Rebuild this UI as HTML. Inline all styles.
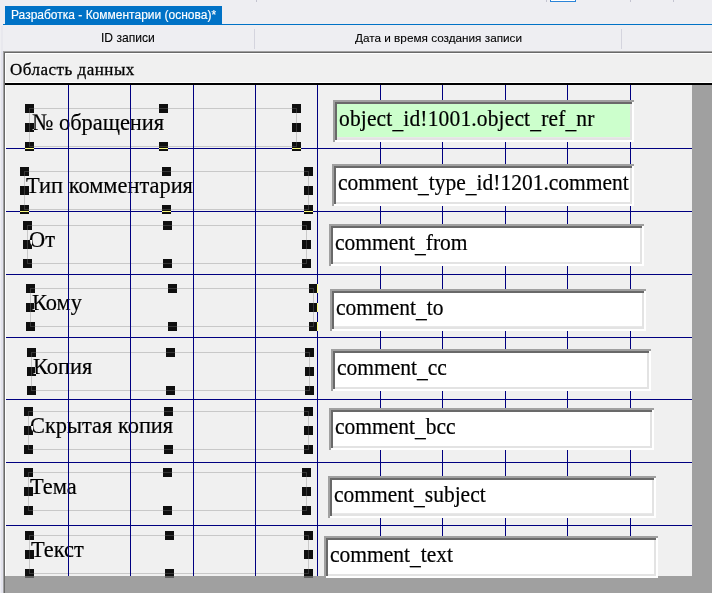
<!DOCTYPE html>
<html><head><meta charset="utf-8"><style>
*{margin:0;padding:0;box-sizing:border-box}
html,body{width:712px;height:593px;overflow:hidden;background:#eeeef2;position:relative}
div{position:absolute}
.sans{font-family:"Liberation Sans",sans-serif}
.serif{font-family:"Liberation Serif",serif}
.vl{width:1px;background:#000080}
.hl{height:1px;background:#000080}
.h{width:9px;height:9px;background:#fff;mix-blend-mode:difference}
.ol{border:1px solid #c8c8c8}
.lt{font-size:22.4px;line-height:22px;white-space:nowrap;color:#000;transform:scaleY(1.06);transform-origin:0 18px;-webkit-text-stroke:0.2px #000}
.tb{border-style:solid;border-width:2px;border-color:#a0a0a0 #fff #fff #a0a0a0}
.tbi{left:0;top:0;right:0;bottom:0;border-style:solid;border-width:2px;border-color:#696969 #e3e3e3 #e3e3e3 #696969;overflow:hidden}
.tt{font-size:21.5px;line-height:22px;white-space:nowrap;color:#000;transform:scaleY(1.08);transform-origin:0 18px;-webkit-text-stroke:0.2px #000}
</style></head><body>

<div style="left:256px;top:0;width:1px;height:2px;background:#c4c4d0"></div>
<div style="left:546px;top:0;width:1px;height:2px;background:#c4c4d0"></div>
<div style="left:550px;top:-1px;width:26px;height:3px;border:1px solid #2b84d8;background:#fff"></div>
<div style="left:630px;top:0;width:1px;height:2px;background:#c4c4d0"></div>
<div style="left:673px;top:0;width:1px;height:2px;background:#c4c4d0"></div>
<div style="left:3px;top:24px;width:709px;height:1px;background:#0072c6"></div>
<div class="sans" style="left:5px;top:6px;width:217px;height:19px;background:#0072c6;color:#fff;font-size:12px;line-height:19px;padding-left:6px;white-space:nowrap;-webkit-text-stroke:0.15px #fff">Разработка - Комментарии (основа)*</div>
<div class="sans" style="left:101px;top:30px;font-size:12.1px;line-height:16px;color:#000;white-space:nowrap;-webkit-text-stroke:0.1px #000">ID записи</div>
<div style="left:254px;top:29px;width:1px;height:20px;background:#d4d4de"></div>
<div class="sans" style="left:355px;top:30px;font-size:11.75px;line-height:16px;color:#000;white-space:nowrap;-webkit-text-stroke:0.1px #000">Дата и время создания записи</div>
<div style="left:621px;top:29px;width:1px;height:20px;background:#d4d4de"></div>
<div style="left:1px;top:26px;width:2px;height:25px;background:#e8e8ee"></div>
<div style="left:1px;top:51px;width:2px;height:542px;background:#e2e2ec"></div>
<div style="left:3px;top:51px;width:709px;height:542px;background:#a0a0a0"></div>
<div style="left:4px;top:52px;width:708px;height:541px;background:#696969"></div>
<div style="left:5px;top:53px;width:707px;height:540px;background:#fff"></div>
<div style="left:6px;top:54px;width:706px;height:539px;background:#f0f0f0"></div>
<div class="serif" style="left:10px;top:60px;font-size:17px;letter-spacing:0.5px;-webkit-text-stroke:0.3px #000;line-height:20px;white-space:nowrap;color:#000">Область данных</div>
<div style="left:5px;top:82px;width:707px;height:1px;background:#fff"></div>
<div style="left:5px;top:83px;width:707px;height:2px;background:#000"></div>
<div class="ol" style="left:29px;top:108px;width:268px;height:39px"></div>
<div class="serif lt" style="left:32px;top:112px">№ обращения</div>
<div class="ol" style="left:24px;top:171px;width:285px;height:39px"></div>
<div class="serif lt" style="left:26px;top:175px">Тип комментария</div>
<div class="ol" style="left:27px;top:225px;width:280px;height:39px"></div>
<div class="serif lt" style="left:29px;top:229px">От</div>
<div class="ol" style="left:30px;top:288px;width:284px;height:39px"></div>
<div class="serif lt" style="left:32px;top:292px">Кому</div>
<div class="ol" style="left:31px;top:352px;width:279px;height:39px"></div>
<div class="serif lt" style="left:33px;top:356px">Копия</div>
<div class="ol" style="left:28px;top:411px;width:281px;height:39px"></div>
<div class="serif lt" style="left:30px;top:415px">Скрытая копия</div>
<div class="ol" style="left:28px;top:472px;width:279px;height:39px"></div>
<div class="serif lt" style="left:30px;top:476px">Тема</div>
<div class="ol" style="left:29px;top:535px;width:280px;height:39px"></div>
<div class="serif lt" style="left:31px;top:539px">Текст</div>
<div class="vl" style="left:68px;top:85px;height:491px"></div>
<div class="vl" style="left:130px;top:85px;height:491px"></div>
<div class="vl" style="left:193px;top:85px;height:491px"></div>
<div class="vl" style="left:255px;top:85px;height:491px"></div>
<div class="vl" style="left:317px;top:85px;height:491px"></div>
<div class="vl" style="left:380px;top:85px;height:491px"></div>
<div class="vl" style="left:442px;top:85px;height:491px"></div>
<div class="vl" style="left:505px;top:85px;height:491px"></div>
<div class="vl" style="left:567px;top:85px;height:491px"></div>
<div class="vl" style="left:630px;top:85px;height:491px"></div>
<div class="hl" style="left:6px;top:148px;width:686px"></div>
<div class="hl" style="left:6px;top:211px;width:686px"></div>
<div class="hl" style="left:6px;top:274px;width:686px"></div>
<div class="hl" style="left:6px;top:337px;width:686px"></div>
<div class="hl" style="left:6px;top:399px;width:686px"></div>
<div class="hl" style="left:6px;top:462px;width:686px"></div>
<div class="hl" style="left:6px;top:525px;width:686px"></div>
<div style="left:692px;top:85px;width:20px;height:508px;background:#a0a0a0"></div>
<div style="left:5px;top:576px;width:707px;height:17px;background:#a0a0a0"></div>
<div style="left:333px;top:100px;width:301px;height:42px;background:#fff"><div style="left:2px;top:2px;width:297px;height:38px;background:#e3e3e3"></div><div style="left:4px;top:4px;width:293px;height:33px;background:#ccffcc;overflow:hidden"><div class="serif tt" style="left:2px;top:4px;letter-spacing:0.15px">object<span style="position:relative;top:2px">_</span>id!1001.object<span style="position:relative;top:2px">_</span>ref<span style="position:relative;top:2px">_</span>nr</div></div><div style="left:4px;top:37px;width:293px;height:1px;background:#e8e8e8"></div><div style="left:0;top:0;width:301px;height:2px;background:#a0a0a0"></div><div style="left:0;top:0;width:2px;height:42px;background:#a0a0a0"></div><div style="left:2px;top:2px;width:297px;height:2px;background:#696969"></div><div style="left:2px;top:2px;width:2px;height:38px;background:#696969"></div></div>
<div style="left:332px;top:164px;width:302px;height:42px;background:#fff"><div style="left:2px;top:2px;width:298px;height:38px;background:#e3e3e3"></div><div style="left:4px;top:4px;width:294px;height:34px;background:#ffffff;overflow:hidden"><div class="serif tt" style="left:2px;top:4px;letter-spacing:0px">comment<span style="position:relative;top:2px">_</span>type<span style="position:relative;top:2px">_</span>id!1201.comment</div></div><div style="left:0;top:0;width:302px;height:2px;background:#a0a0a0"></div><div style="left:0;top:0;width:2px;height:42px;background:#a0a0a0"></div><div style="left:2px;top:2px;width:298px;height:2px;background:#696969"></div><div style="left:2px;top:2px;width:2px;height:38px;background:#696969"></div></div>
<div style="left:329px;top:224px;width:315px;height:42px;background:#fff"><div style="left:2px;top:2px;width:311px;height:38px;background:#e3e3e3"></div><div style="left:4px;top:4px;width:307px;height:34px;background:#ffffff;overflow:hidden"><div class="serif tt" style="left:2px;top:4px;letter-spacing:0px">comment<span style="position:relative;top:2px">_</span>from</div></div><div style="left:0;top:0;width:315px;height:2px;background:#a0a0a0"></div><div style="left:0;top:0;width:2px;height:42px;background:#a0a0a0"></div><div style="left:2px;top:2px;width:311px;height:2px;background:#696969"></div><div style="left:2px;top:2px;width:2px;height:38px;background:#696969"></div></div>
<div style="left:330px;top:289px;width:316px;height:42px;background:#fff"><div style="left:2px;top:2px;width:312px;height:38px;background:#e3e3e3"></div><div style="left:4px;top:4px;width:308px;height:33px;background:#ffffff;overflow:hidden"><div class="serif tt" style="left:2px;top:4px;letter-spacing:0px">comment<span style="position:relative;top:2px">_</span>to</div></div><div style="left:4px;top:37px;width:308px;height:1px;background:#e8e8e8"></div><div style="left:0;top:0;width:316px;height:2px;background:#a0a0a0"></div><div style="left:0;top:0;width:2px;height:42px;background:#a0a0a0"></div><div style="left:2px;top:2px;width:312px;height:2px;background:#696969"></div><div style="left:2px;top:2px;width:2px;height:38px;background:#696969"></div></div>
<div style="left:331px;top:349px;width:320px;height:42px;background:#fff"><div style="left:2px;top:2px;width:316px;height:38px;background:#e3e3e3"></div><div style="left:4px;top:4px;width:312px;height:34px;background:#ffffff;overflow:hidden"><div class="serif tt" style="left:2px;top:4px;letter-spacing:0px">comment<span style="position:relative;top:2px">_</span>cc</div></div><div style="left:0;top:0;width:320px;height:2px;background:#a0a0a0"></div><div style="left:0;top:0;width:2px;height:42px;background:#a0a0a0"></div><div style="left:2px;top:2px;width:316px;height:2px;background:#696969"></div><div style="left:2px;top:2px;width:2px;height:38px;background:#696969"></div></div>
<div style="left:329px;top:408px;width:325px;height:42px;background:#fff"><div style="left:2px;top:2px;width:321px;height:38px;background:#e3e3e3"></div><div style="left:4px;top:4px;width:317px;height:34px;background:#ffffff;overflow:hidden"><div class="serif tt" style="left:2px;top:4px;letter-spacing:0px">comment<span style="position:relative;top:2px">_</span>bcc</div></div><div style="left:0;top:0;width:325px;height:2px;background:#a0a0a0"></div><div style="left:0;top:0;width:2px;height:42px;background:#a0a0a0"></div><div style="left:2px;top:2px;width:321px;height:2px;background:#696969"></div><div style="left:2px;top:2px;width:2px;height:38px;background:#696969"></div></div>
<div style="left:328px;top:476px;width:328px;height:42px;background:#fff"><div style="left:2px;top:2px;width:324px;height:38px;background:#e3e3e3"></div><div style="left:4px;top:4px;width:320px;height:33px;background:#ffffff;overflow:hidden"><div class="serif tt" style="left:2px;top:4px;letter-spacing:0px">comment<span style="position:relative;top:2px">_</span>subject</div></div><div style="left:4px;top:37px;width:320px;height:1px;background:#e8e8e8"></div><div style="left:0;top:0;width:328px;height:2px;background:#a0a0a0"></div><div style="left:0;top:0;width:2px;height:42px;background:#a0a0a0"></div><div style="left:2px;top:2px;width:324px;height:2px;background:#696969"></div><div style="left:2px;top:2px;width:2px;height:38px;background:#696969"></div></div>
<div style="left:324px;top:536px;width:334px;height:42px;background:#fff"><div style="left:2px;top:2px;width:330px;height:38px;background:#e3e3e3"></div><div style="left:4px;top:4px;width:326px;height:34px;background:#ffffff;overflow:hidden"><div class="serif tt" style="left:2px;top:4px;letter-spacing:0px">comment<span style="position:relative;top:2px">_</span>text</div></div><div style="left:0;top:0;width:334px;height:2px;background:#a0a0a0"></div><div style="left:0;top:0;width:2px;height:42px;background:#a0a0a0"></div><div style="left:2px;top:2px;width:330px;height:2px;background:#696969"></div><div style="left:2px;top:2px;width:2px;height:38px;background:#696969"></div></div>
<div class="h" style="left:25px;top:104px"></div>
<div class="h" style="left:25px;top:142px"></div>
<div class="h" style="left:159px;top:104px"></div>
<div class="h" style="left:159px;top:142px"></div>
<div class="h" style="left:292px;top:104px"></div>
<div class="h" style="left:292px;top:142px"></div>
<div class="h" style="left:25px;top:123px"></div>
<div class="h" style="left:292px;top:123px"></div>
<div class="h" style="left:20px;top:167px"></div>
<div class="h" style="left:20px;top:205px"></div>
<div class="h" style="left:162px;top:167px"></div>
<div class="h" style="left:162px;top:205px"></div>
<div class="h" style="left:304px;top:167px"></div>
<div class="h" style="left:304px;top:205px"></div>
<div class="h" style="left:20px;top:186px"></div>
<div class="h" style="left:304px;top:186px"></div>
<div class="h" style="left:23px;top:221px"></div>
<div class="h" style="left:23px;top:259px"></div>
<div class="h" style="left:163px;top:221px"></div>
<div class="h" style="left:163px;top:259px"></div>
<div class="h" style="left:302px;top:221px"></div>
<div class="h" style="left:302px;top:259px"></div>
<div class="h" style="left:23px;top:240px"></div>
<div class="h" style="left:302px;top:240px"></div>
<div class="h" style="left:26px;top:284px"></div>
<div class="h" style="left:26px;top:322px"></div>
<div class="h" style="left:168px;top:284px"></div>
<div class="h" style="left:168px;top:322px"></div>
<div class="h" style="left:309px;top:284px"></div>
<div class="h" style="left:309px;top:322px"></div>
<div class="h" style="left:26px;top:303px"></div>
<div class="h" style="left:309px;top:303px"></div>
<div class="h" style="left:27px;top:348px"></div>
<div class="h" style="left:27px;top:386px"></div>
<div class="h" style="left:166px;top:348px"></div>
<div class="h" style="left:166px;top:386px"></div>
<div class="h" style="left:305px;top:348px"></div>
<div class="h" style="left:305px;top:386px"></div>
<div class="h" style="left:27px;top:367px"></div>
<div class="h" style="left:305px;top:367px"></div>
<div class="h" style="left:24px;top:407px"></div>
<div class="h" style="left:24px;top:445px"></div>
<div class="h" style="left:164px;top:407px"></div>
<div class="h" style="left:164px;top:445px"></div>
<div class="h" style="left:304px;top:407px"></div>
<div class="h" style="left:304px;top:445px"></div>
<div class="h" style="left:24px;top:426px"></div>
<div class="h" style="left:304px;top:426px"></div>
<div class="h" style="left:24px;top:468px"></div>
<div class="h" style="left:24px;top:506px"></div>
<div class="h" style="left:163px;top:468px"></div>
<div class="h" style="left:163px;top:506px"></div>
<div class="h" style="left:302px;top:468px"></div>
<div class="h" style="left:302px;top:506px"></div>
<div class="h" style="left:24px;top:487px"></div>
<div class="h" style="left:302px;top:487px"></div>
<div class="h" style="left:25px;top:531px"></div>
<div class="h" style="left:25px;top:569px"></div>
<div class="h" style="left:165px;top:531px"></div>
<div class="h" style="left:165px;top:569px"></div>
<div class="h" style="left:304px;top:531px"></div>
<div class="h" style="left:304px;top:569px"></div>
<div class="h" style="left:25px;top:550px"></div>
<div class="h" style="left:304px;top:550px"></div>
</body></html>
